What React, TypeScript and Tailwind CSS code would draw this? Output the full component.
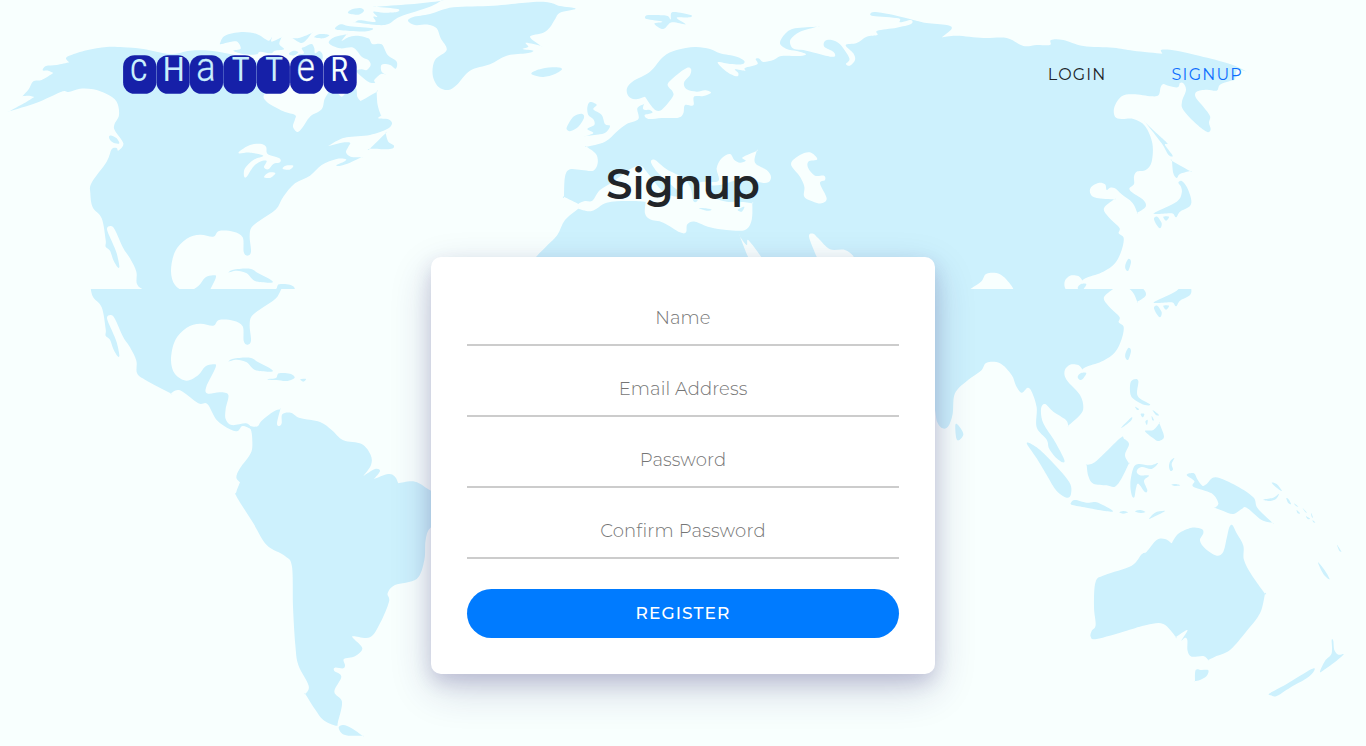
import React from "react";

type Shape = number[];

// Map artwork lives on a grid three times finer than the page.
// A point that is written twice in a row becomes a sharp corner.
function smooth(p: Shape, dx = 0, dy = 0): string {
  const n = p.length / 2;
  const X = (i: number) => p[2 * ((i + n) % n)] + dx;
  const Y = (i: number) => p[2 * ((i + n) % n) + 1] + dy;
  let d = `M${X(0)} ${Y(0)}`;
  for (let i = 0; i < n; i++) {
    const c1x = X(i) + (X(i + 1) - X(i - 1)) / 6;
    const c1y = Y(i) + (Y(i + 1) - Y(i - 1)) / 6;
    const c2x = X(i + 1) - (X(i + 2) - X(i)) / 6;
    const c2y = Y(i + 1) - (Y(i + 2) - Y(i)) / 6;
    d += `C${c1x.toFixed(1)} ${c1y.toFixed(1)} ${c2x.toFixed(1)} ${c2y.toFixed(1)} ${X(i + 1)} ${Y(i + 1)}`;
  }
  return d + "Z";
}

const americaNorth: Shape = [
  30, 333, 30, 333, 72, 310, 103, 291, 103, 291, 88, 287, 68, 288, 68, 288, 86, 268, 100, 244, 125, 240, 160, 219, 160, 219, 145, 212, 128, 211,
  138, 198, 170, 195, 208, 187, 208, 187, 198, 175, 212, 166, 260, 151, 320, 141, 370, 142, 430, 147, 510, 162, 570, 152, 630, 152, 690, 162,
  760, 180, 850, 210, 880, 240, 830, 262, 793, 283, 800, 305, 850, 334, 885, 345, 885, 358, 879, 380, 893, 396, 908, 382, 930, 350,
  965, 328, 975, 295, 1000, 265, 1025, 290, 1050, 262, 1068, 265, 1072, 290, 1082, 303, 1082, 303, 1130, 276, 1130, 276, 1133, 315, 1143, 347,
  1143, 347, 1135, 355, 1165, 358, 1176, 371, 1160, 388, 1110, 405, 1040, 412, 1010, 423, 985, 438, 985, 438, 1025, 428, 1050, 428, 1045, 440, 1038, 457,
  1052, 470, 1084, 472, 1084, 472, 1050, 488, 1022, 497, 1008, 496, 1030, 486, 1038, 478, 1010, 477, 965, 495, 930, 527, 885, 550, 850, 590, 828, 628,
  785, 658, 755, 682, 749, 710, 753, 755, 742, 767, 731, 755, 728, 712, 700, 695, 657, 693, 640, 710, 600, 704, 560, 716, 525, 755, 513, 813,
  525, 855, 560, 875, 595, 858, 615, 833, 640, 826, 647, 835, 618, 896, 624, 914, 660, 910, 685, 918, 677, 960, 677, 990, 695, 1008, 738, 1003,
  755, 1014, 770, 1014, 780, 1025, 755, 1020, 728, 1011, 713, 1026, 690, 1021, 650, 993, 622, 945, 595, 943, 540, 904, 512, 913, 512, 913,
  435, 872, 411, 852, 409, 815, 390, 775, 370, 745, 345, 690, 332, 678, 321, 688, 338, 730, 350, 760, 358, 798, 353, 802, 340, 780, 330, 752,
  317, 740, 317, 720, 305, 655, 278, 622, 271, 580, 275, 548, 320, 485, 335, 448, 350, 444, 355, 452, 370, 430, 345, 392, 343, 374, 357, 345,
  350, 305, 320, 282, 280, 268, 240, 266, 205, 276, 185, 275, 110, 308,
];

const americaSouth: Shape = [
  110, 80, 125, 62, 160, 35, 181, 28, 181, 28, 171, 70, 178, 78, 185, 70, 187, 43, 212, 38, 240, 54, 300, 66, 335, 90, 370, 121, 425, 132, 452, 165,
  453, 195, 430, 228, 430, 228, 465, 207, 480, 213, 462, 237, 462, 237, 505, 222, 525, 230, 535, 250, 535, 250, 585, 245, 633, 272, 690, 300, 690, 350, 633, 382,
  617, 420, 613, 480, 590, 537, 525, 555, 503, 580, 507, 605, 480, 670, 450, 712, 400, 709, 402, 717, 427, 745, 405, 769, 372, 777, 375, 795, 370, 805,
  345, 803, 343, 813, 364, 830, 343, 875, 366, 905, 354, 965, 348, 977, 310, 960, 285, 928, 256, 882, 256, 882, 266, 857, 235, 795, 226, 735, 219, 620, 216, 500,
  195, 468, 140, 435, 100, 370, 50, 290, 49, 276, 60, 247, 60, 247, 49, 232, 60, 205, 92, 160, 97, 125, 92, 88, 75, 77,
];

const eurasia: Shape = [
  1560, 830, 1608, 771, 1640, 738, 1672, 705, 1695, 660, 1735, 626, 1735, 626, 1738, 613, 1738, 613, 1692, 590, 1692, 590, 1695, 530, 1710, 508, 1745, 510, 1780, 512,
  1793, 490, 1788, 462, 1760, 440, 1760, 440, 1815, 425, 1850, 395, 1880, 372, 1915, 357, 1912, 325, 1932, 312, 1932, 312, 1930, 328, 1955, 335, 1934, 345,
  1945, 357, 1985, 354, 2035, 353, 2050, 340, 2055, 315, 2080, 316, 2082, 290, 2110, 288, 2133, 278, 2115, 271, 2090, 275, 2060, 268, 2052, 248,
  2070, 225, 2073, 207, 2060, 204, 2030, 225, 2003, 253, 2018, 275, 2018, 290, 1990, 325, 1975, 333, 1960, 325, 1935, 290, 1935, 290, 1905, 298, 1885, 288,
  1881, 265, 1900, 243, 1950, 215, 1990, 170, 2030, 150, 2085, 141, 2130, 147, 2160, 160, 2210, 170, 2233, 183, 2225, 193, 2190, 192, 2153, 187,
  2180, 215, 2210, 229, 2215, 220, 2205, 208, 2235, 212, 2235, 204, 2272, 193, 2267, 177, 2278, 176, 2290, 186, 2320, 180, 2345, 168, 2400, 168, 2418, 162,
  2390, 153, 2360, 147, 2340, 130, 2355, 102, 2385, 85, 2452, 80, 2452, 80, 2400, 95, 2372, 118, 2373, 138, 2385, 148, 2410, 150, 2450, 160, 2490, 170,
  2505, 168, 2500, 155, 2473, 140, 2475, 123, 2495, 120, 2520, 133, 2548, 175, 2538, 192, 2550, 197, 2565, 180, 2560, 160, 2537, 135, 2570, 129,
  2600, 110, 2632, 105, 2632, 92, 2690, 83, 2733, 72, 2733, 60, 2700, 67, 2695, 55, 2620, 48, 2612, 40, 2625, 36, 2670, 43, 2740, 60, 2780, 69,
  2840, 75, 2855, 86, 2825, 112, 2825, 112, 2870, 107, 2950, 114, 3020, 114, 3070, 138, 3110, 135, 3150, 135, 3153, 120, 3190, 120, 3250, 138,
  3340, 143, 3400, 152, 3487, 161, 3487, 161, 3485, 149, 3530, 152, 3600, 168, 3690, 192, 3741, 215, 3741, 215, 3712, 210, 3705, 238, 3690, 243, 3660, 254,
  3650, 272, 3620, 269, 3590, 275, 3587, 292, 3610, 320, 3630, 348, 3627, 368, 3632, 388, 3622, 396, 3590, 373, 3550, 330, 3546, 305, 3558, 270,
  3550, 250, 3540, 249, 3533, 262, 3505, 257, 3490, 252, 3482, 262, 3476, 285, 3455, 289, 3400, 283, 3365, 289, 3343, 322, 3345, 350, 3365, 357,
  3400, 357, 3435, 378, 3457, 430, 3455, 485, 3437, 510, 3410, 515, 3402, 530, 3402, 552, 3388, 566, 3400, 580, 3430, 600, 3437, 620, 3412, 638, 3412, 638,
  3397, 608, 3365, 583, 3345, 565, 3330, 563, 3320, 570, 3315, 553, 3295, 549, 3272, 563, 3272, 583, 3290, 594, 3342, 598, 3342, 598, 3312, 625, 3325, 650,
  3358, 683, 3356, 700, 3371, 714, 3365, 750, 3345, 790, 3310, 815, 3263, 832, 3247, 841, 3247, 841, 3235, 828, 3210, 827, 3194, 845, 3200, 873, 3240, 918,
  3250, 955, 3240, 978, 3205, 1010, 3205, 1010, 3197, 992, 3160, 968, 3135, 945, 3123, 960, 3130, 1003, 3165, 1058, 3192, 1110, 3188, 1120, 3165, 1103, 3147, 1078,
  3140, 1052, 3110, 1015, 3110, 955, 3095, 908, 3083, 896, 3065, 911, 3048, 890, 3035, 858, 3000, 823, 2960, 821, 2943, 845, 2905, 872, 2865, 913,
  2858, 975, 2845, 1012, 2828, 1018, 2812, 1000, 2790, 940, 2700, 1000, 2300, 1100, 1700, 1000,
];

// Each island: offset x, offset y, outline
const islands: [number, number, Shape][] = [
  [0, 0, [327, 410, 335, 407, 350, 415, 358, 430, 345, 430, 332, 422]],
  [0, 0, [684, 818, 700, 809, 750, 806, 775, 820, 816, 842, 810, 848, 765, 843, 740, 820, 710, 812, 684, 818]],
  [0, 0, [805, 870, 828, 867, 837, 853, 870, 854, 884, 866, 860, 876, 830, 873, 805, 872]],
  [0, 0, [901, 871, 918, 870, 910, 878]],
  [0, 0, [1110, 446, 1110, 446, 1157, 400, 1157, 400, 1165, 425, 1182, 437, 1170, 447]],
  [0, 0, [660, 130, 675, 107, 725, 96, 770, 102, 805, 122, 815, 112, 815, 125, 845, 112, 845, 112, 838, 132, 852, 148, 825, 152, 812, 160, 780, 155, 770, 163, 735, 163, 700, 152, 722, 146, 712, 125, 690, 126, 665, 132]],
  [0, 0, [1045, 40, 1053, 29, 1080, 24, 1092, 32, 1075, 44]],
  [0, 0, [1130, 20, 1130, 20, 1230, 13, 1322, 3, 1322, 3, 1290, 20, 1200, 50, 1165, 72, 1130, 75, 1065, 67, 1065, 67, 1080, 61, 1125, 66, 1120, 50, 1132, 50, 1120, 35, 1150, 38, 1190, 36, 1193, 27]],
  [0, 0, [1006, 88, 1022, 73, 1050, 79, 1117, 85, 1100, 94, 1050, 93]],
  [0, 0, [878, 115, 878, 115, 900, 113, 935, 100, 935, 100, 915, 124, 900, 128]],
  [0, 0, [943, 112, 960, 102, 988, 105, 970, 115]],
  [0, 0, [867, 160, 880, 152, 895, 156, 885, 165, 872, 166]],
  [0, 0, [905, 145, 915, 140, 935, 132, 943, 145, 945, 160, 958, 153, 968, 165, 960, 185, 905, 185, 895, 165, 912, 160]],
  [0, 0, [987, 130, 1000, 113, 1040, 103, 1040, 103, 1025, 123, 1045, 112, 1070, 107, 1105, 115, 1117, 132, 1145, 133, 1163, 165, 1190, 185, 1187, 206, 1170, 195, 1145, 194, 1145, 215, 1160, 225, 1143, 222, 1123, 240, 1125, 248, 1105, 245, 1070, 215, 1085, 208, 1100, 210, 1112, 195, 1105, 180, 1085, 170, 1060, 143, 1020, 145]],
  [1200, 0, [24, 62, 40, 51, 90, 42, 160, 22, 280, 17, 400, 6, 450, 8, 480, 18, 527, 26, 480, 38, 465, 58, 450, 82, 430, 98, 390, 110, 422, 137, 422, 137, 378, 128, 385, 140, 368, 147, 400, 152, 380, 160, 320, 167, 270, 193, 210, 212, 170, 255, 145, 270, 115, 260, 98, 225, 105, 180, 140, 150, 122, 115, 110, 85, 85, 74, 45, 75]],
  [1200, 0, [395, 218, 425, 206, 470, 202, 486, 208, 465, 222, 430, 231, 402, 226]],
  [1200, 0, [737, 48, 750, 45, 800, 47, 812, 58, 818, 36, 872, 45, 868, 52, 830, 53, 857, 73, 815, 67, 790, 87, 763, 71, 787, 65, 740, 57]],
  [1200, 0, [562, 322, 570, 306, 590, 314, 580, 328, 605, 345, 615, 372, 630, 378, 618, 397, 600, 403, 557, 408, 557, 408, 580, 399, 562, 387, 583, 375, 580, 358, 565, 345]],
  [1200, 0, [501, 380, 520, 350, 545, 341, 552, 353, 535, 380, 512, 393, 502, 390]],
  [1200, 0, [725, 338, 745, 329, 758, 337, 740, 343]],
  [2400, 0, [1037, 368, 1037, 368, 1070, 400, 1102, 430, 1095, 435, 1118, 467, 1105, 464, 1085, 430]],
  [2400, 0, [1116, 483, 1116, 483, 1170, 513, 1170, 513, 1140, 522, 1130, 534, 1120, 520]],
  [2400, 0, [1135, 548, 1145, 543, 1160, 560, 1173, 595, 1170, 618, 1140, 635, 1128, 652, 1115, 640, 1070, 642, 1066, 637, 1130, 605, 1145, 580, 1143, 560]],
  [2400, 0, [1062, 655, 1072, 650, 1085, 670, 1080, 685, 1068, 672]],
  [2400, 0, [1090, 650, 1107, 650, 1098, 662]],
  [2400, 0, [976, 795, 985, 777, 993, 785, 985, 812, 977, 808]],
  [2760, 573, [473, 290, 483, 279, 499, 279, 489, 296, 480, 300]],
  [2760, 573, [106, 435, 115, 436, 130, 462, 118, 480, 109, 475]],
  [2760, 573, [320, 489, 350, 502, 400, 550, 448, 607, 453, 642, 440, 653, 410, 633, 380, 585, 350, 535]],
  [2760, 573, [453, 668, 465, 660, 500, 668, 530, 667, 578, 692, 560, 694, 500, 683, 457, 675]],
  [2760, 573, [500, 555, 500, 555, 530, 542, 600, 475, 612, 476, 627, 492, 615, 525, 627, 550, 627, 550, 605, 595, 585, 620, 560, 616, 520, 611, 505, 588]],
  [2760, 573, [631, 310, 642, 298, 655, 303, 653, 348, 690, 373, 675, 375, 648, 362, 632, 345]],
  [2760, 573, [606, 440, 635, 412, 632, 423, 608, 442]],
  [2760, 573, [675, 453, 700, 450, 718, 430, 718, 430, 732, 470, 715, 483, 700, 475]],
  [2760, 573, [645, 380, 657, 387, 652, 390]],
  [2760, 573, [662, 402, 673, 402, 668, 412]],
  [2760, 573, [676, 425, 683, 420, 681, 435]],
  [2760, 573, [695, 408, 702, 420, 697, 420]],
  [2760, 573, [698, 390, 717, 405, 708, 405]],
  [2760, 573, [631, 610, 640, 565, 655, 552, 690, 556, 714, 549, 695, 567, 665, 561, 650, 573, 660, 586, 687, 587, 672, 602, 682, 630, 675, 636, 655, 611, 648, 625, 643, 652, 635, 645]],
  [2760, 573, [598, 697, 610, 693, 624, 697, 610, 701]],
  [2760, 573, [645, 694, 660, 690, 676, 696, 660, 699]],
  [2760, 573, [754, 614, 767, 612, 781, 616, 767, 618]],
  [2760, 573, [687, 717, 705, 698, 735, 693, 705, 709]],
  [2760, 573, [763, 534, 755, 552, 759, 568, 752, 573, 747, 560, 751, 543]],
  [3180, 1083, [380, 75, 402, 70, 412, 88, 427, 107, 440, 102, 467, 82, 530, 108, 580, 142, 593, 175, 637, 218, 637, 218, 605, 210, 560, 173, 545, 177, 520, 192, 490, 183, 465, 173, 465, 173, 475, 160, 455, 130, 400, 110, 403, 93]],
  [3180, 1083, [635, 98, 650, 102, 666, 123, 650, 113]],
  [3180, 1083, [610, 149, 640, 143, 657, 131, 648, 147, 628, 153]],
  [3180, 1083, [679, 145, 685, 147, 693, 162, 684, 158]],
  [3180, 1083, [702, 160, 715, 170, 708, 168]],
  [3180, 1083, [710, 180, 720, 190, 713, 190]],
  [3180, 1083, [728, 174, 741, 188, 735, 185]],
  [3180, 1083, [738, 199, 750, 206, 743, 207]],
  [3180, 1083, [753, 188, 759, 202, 755, 200]],
  [3180, 1083, [758, 210, 766, 218, 760, 217]],
  [3180, 1083, [831, 284, 844, 304, 838, 302]],
  [3180, 1083, [774, 337, 795, 362, 809, 388, 790, 372]],
  [3180, 1083, [508, 232, 517, 225, 530, 250, 550, 287, 552, 330, 575, 375, 615, 431, 615, 431, 600, 490, 560, 543, 510, 600, 465, 620, 445, 630, 445, 630, 430, 618, 395, 620, 383, 603, 382, 570, 375, 563, 364, 572, 382, 543, 375, 543, 348, 561, 348, 561, 310, 522, 260, 525, 200, 542, 110, 567, 92, 560, 95, 543, 107, 525, 102, 470, 107, 395, 135, 375, 215, 347, 245, 313, 260, 305, 290, 270, 315, 267, 335, 280, 335, 280, 355, 251, 395, 233, 425, 237, 430, 250, 420, 272, 437, 297, 470, 317, 490, 305, 500, 265]],
  [3180, 1083, [407, 660, 425, 660, 445, 661, 440, 678, 420, 690, 405, 693, 405, 693]],
  [3180, 1083, [815, 570, 820, 573, 823, 600, 835, 614, 851, 613, 830, 632, 800, 654, 780, 666, 795, 633, 815, 610]],
  [3180, 1083, [629, 730, 680, 702, 755, 657, 762, 663, 740, 685, 690, 713, 650, 738, 633, 736]],
  [660, 933, [356, 982, 370, 975, 395, 985, 427, 1007, 427, 1007, 385, 1007, 365, 1000]],
];

const water: [number, number, Shape][] = [
  [0, 0, [715, 459, 745, 437, 780, 431, 798, 440, 803, 462, 838, 475, 840, 487, 820, 492, 805, 508, 792, 502, 800, 483, 780, 485, 760, 500, 740, 530, 732, 528, 735, 505, 760, 480, 790, 467, 750, 458]],
  [0, 0, [792, 532, 805, 518, 826, 519, 812, 533]],
  [0, 0, [848, 506, 857, 497, 880, 497, 868, 509]],
  [1200, 0, [535, 612, 555, 603, 577, 602, 600, 570, 640, 545, 690, 508, 722, 497, 740, 515, 790, 575, 835, 590, 845, 580, 820, 560, 775, 520, 753, 487, 765, 480, 800, 508, 850, 535, 872, 565, 880, 603, 893, 600, 888, 560, 905, 547, 925, 560, 940, 590, 980, 605, 1020, 605, 1057, 610, 1057, 610, 1055, 660, 1035, 690, 980, 690, 930, 682, 885, 665, 862, 673, 858, 697, 840, 697, 790, 668, 750, 658, 735, 640, 737, 605, 737, 605, 680, 603, 620, 608, 575, 633, 535, 626, 535, 626]],
  [1200, 0, [950, 505, 965, 475, 990, 462, 1003, 480, 1020, 488, 1037, 482, 1028, 472, 1070, 453, 1070, 453, 1065, 488, 1100, 510, 1113, 530, 1105, 547, 1080, 547, 1040, 530, 1000, 543, 960, 555, 900, 556, 905, 546, 955, 543]],
  [1200, 0, [1173, 492, 1200, 465, 1230, 457, 1252, 478, 1225, 485, 1225, 505, 1245, 527, 1272, 527, 1275, 540, 1260, 550, 1280, 595, 1265, 610, 1240, 605, 1213, 590, 1213, 560, 1200, 530]],
  [1200, 0, [1020, 710, 1020, 710, 1040, 735, 1047, 722, 1100, 800, 1060, 800]],
  [1200, 0, [1227, 710, 1240, 701, 1255, 715, 1290, 748, 1335, 750, 1362, 775, 1330, 800, 1265, 800, 1250, 770]],
];

const seaIslands: [number, number, Shape][] = [
  [1200, 0, [897, 625, 915, 625, 935, 629, 920, 632]],
  [1200, 0, [1013, 629, 1033, 620, 1025, 635]],
];

function Continents() {
  return (
    <g transform="scale(0.333333)">
      <g fill="#cdf1fd">
        <path d={smooth(americaNorth)} />
        <path d={smooth(americaSouth, 660, 933)} />
        <path d={smooth(eurasia)} />
        {islands.map(([x, y, s], i) => (
          <path key={i} d={smooth(s, x, y)} />
        ))}
      </g>
      <g fill="#f8fffe">
        {water.map(([x, y, s], i) => (
          <path key={i} d={smooth(s, x, y)} />
        ))}
      </g>
      <g fill="#cdf1fd">
        {seaIslands.map(([x, y, s], i) => (
          <path key={i} d={smooth(s, x, y)} />
        ))}
      </g>
    </g>
  );
}

function WorldMap() {
  return (
    <svg className="absolute inset-0 h-[746px] w-[1366px]" viewBox="0 0 1366 746" aria-hidden="true">
      <defs>
        <clipPath id="upper">
          <rect width="1366" height="289" />
        </clipPath>
        <clipPath id="lower">
          <rect y="289" width="1366" height="457" />
        </clipPath>
      </defs>
      <g clipPath="url(#upper)">
        <Continents />
      </g>
      <g clipPath="url(#lower)">
        <g transform="translate(0 89)">
          <Continents />
        </g>
      </g>
    </svg>
  );
}

// letter, font size, left edge of the glyph, horizontal scale, weight, fill
const letters: [string, number, number, number, number, string][] = [
  ["C", 31.5, 7, 0.85, 400, "#c9effc"],
  ["H", 32.5, 6.4, 0.95, 400, "#c9effc"],
  ["a", 41, 6.5, 0.88, 300, "#c9effc"],
  ["T", 32.5, 8.6, 0.92, 400, "#c9effc"],
  ["T", 32.5, 8.6, 0.92, 400, "#c9effc"],
  ["e", 41, 6.7, 0.85, 300, "url(#shade)"],
  ["R", 32.5, 7.2, 0.88, 400, "#f4fdff"],
];

function Logo() {
  return (
    <svg className="h-[39px] w-[234px] overflow-visible" viewBox="0 0 234 39" role="img" aria-label="Chatter">
      <defs>
        <linearGradient id="shade" x1="0" y1="0" x2="0.35" y2="1">
          <stop offset="0.45" stopColor="#c9effc" />
          <stop offset="0.6" stopColor="#f8fffe" />
        </linearGradient>
      </defs>
      {letters.map(([ch, size, x, sx, weight, fill], i) => (
        <g key={i} transform={`translate(${i * 33.4} 0)`}>
          <rect x="0.1" y="0.2" width="33.2" height="38.6" rx="11.5" fill="#1620a8" />
          <text
            transform={`translate(${x} 26) scale(${sx} 1)`}
            fontSize={size}
            fontWeight={weight}
            fill={fill}
            stroke={fill}
            strokeWidth={weight === 300 ? 0.3 : 0}
            className="font-['Roboto',sans-serif]"
          >
            {ch}
          </text>
        </g>
      ))}
    </svg>
  );
}

const fields = [
  { label: "Name", type: "text", spacing: "tracking-[0.1px]" },
  { label: "Email Address", type: "email", spacing: "tracking-[0.1px]" },
  { label: "Password", type: "password", spacing: "tracking-[0.1px]" },
  { label: "Confirm Password", type: "password", spacing: "tracking-[0.2px]" },
];

export default function App() {
  return (
    <div className="relative h-[746px] w-full overflow-hidden bg-[#f8fffe] font-['Montserrat','Inter',sans-serif] text-[#212529]">
      <WorldMap />
      <div className="relative flex flex-col items-center">
        <header className="flex h-[149px] w-full items-center justify-between px-[123px]">
          <Logo />
          <nav className="flex gap-[65px] text-[16px] leading-6 tracking-[1.2px]">
            <a href="#login" className="text-[#212529]">LOGIN</a>
            <a href="#signup" className="text-[#0d6efd]">SIGNUP</a>
          </nav>
        </header>
        <h1 className="mt-[8px] text-[42px] leading-[54px] font-semibold">Signup</h1>
        <form className="mt-[46px] flex w-[504px] flex-col rounded-[10px] bg-white p-9 shadow-[0_15px_42px_rgba(40,30,100,0.2),0_8px_18px_rgba(60,50,130,0.17)]">
          <div className="flex flex-col gap-[18px]">
            {fields.map((f) => (
              <input
                key={f.label}
                type={f.type}
                placeholder={f.label}
                aria-label={f.label}
                className={`h-[53px] w-full border-b-2 border-[#cccccc] bg-transparent pb-[2px] text-center text-[18px] font-light outline-none placeholder:text-[#757575] ${f.spacing}`}
              />
            ))}
          </div>
          <button type="button" className="mt-[30px] h-[49px] rounded-[25px] bg-[#007bff] text-[17px] font-medium tracking-[1.1px] text-white">
            REGISTER
          </button>
        </form>
      </div>
    </div>
  );
}
